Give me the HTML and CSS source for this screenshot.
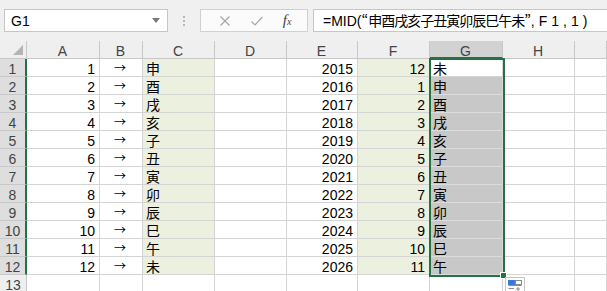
FILE: index.html
```html
<!DOCTYPE html>
<html lang="ja">
<head>
  <meta charset="UTF-8">
  <title>Excel - 干支</title>
  <link rel="stylesheet" href="styles.css">
</head>
<body>
<div class="app">
  <div class="bar">
    <div class="namebox"><span>G1</span><span class="caret"></span></div>
    <div class="grip"><i></i><i></i><i></i></div>
    <div class="fxbox">
      <svg class="ico" width="12" height="12" viewBox="0 0 12 12"><path d="M1.5 1.5 L10.5 10.5 M10.5 1.5 L1.5 10.5" stroke="#a6a6a6" stroke-width="1.2" fill="none"/></svg>
      <svg class="ico" width="14" height="12" viewBox="0 0 14 12"><path d="M1.5 6.5 L5 10 L12.5 2" stroke="#a6a6a6" stroke-width="1.2" fill="none"/></svg>
      <span class="fx">f<small>x</small></span>
    </div>
    <div class="formula">=MID(<span class="wq">“</span><span class="cjk">申酉戌亥子丑寅卯辰巳午未</span><span class="wq">”</span><span class="tail">,F1,1)</span></div>
  </div>

  <div class="sheet">
    <div class="row head">
      <div class="corner"><span class="tri"></span></div>
      <div>A</div><div>B</div><div>C</div><div>D</div><div>E</div><div>F</div><div class="hsel">G</div><div>H</div><div></div>
    </div>
    <div class="row"><div class="rh">1</div><div class="num">1</div><div class="arr">→</div><div class="green">申</div><div></div><div class="num">2015</div><div class="num green">12</div><div>未</div><div></div><div></div></div>
    <div class="row"><div class="rh">2</div><div class="num">2</div><div class="arr">→</div><div class="green">酉</div><div></div><div class="num">2016</div><div class="num green">1</div><div class="gray">申</div><div></div><div></div></div>
    <div class="row"><div class="rh">3</div><div class="num">3</div><div class="arr">→</div><div class="green">戌</div><div></div><div class="num">2017</div><div class="num green">2</div><div class="gray">酉</div><div></div><div></div></div>
    <div class="row"><div class="rh">4</div><div class="num">4</div><div class="arr">→</div><div class="green">亥</div><div></div><div class="num">2018</div><div class="num green">3</div><div class="gray">戌</div><div></div><div></div></div>
    <div class="row"><div class="rh">5</div><div class="num">5</div><div class="arr">→</div><div class="green">子</div><div></div><div class="num">2019</div><div class="num green">4</div><div class="gray">亥</div><div></div><div></div></div>
    <div class="row"><div class="rh">6</div><div class="num">6</div><div class="arr">→</div><div class="green">丑</div><div></div><div class="num">2020</div><div class="num green">5</div><div class="gray">子</div><div></div><div></div></div>
    <div class="row"><div class="rh">7</div><div class="num">7</div><div class="arr">→</div><div class="green">寅</div><div></div><div class="num">2021</div><div class="num green">6</div><div class="gray">丑</div><div></div><div></div></div>
    <div class="row"><div class="rh">8</div><div class="num">8</div><div class="arr">→</div><div class="green">卯</div><div></div><div class="num">2022</div><div class="num green">7</div><div class="gray">寅</div><div></div><div></div></div>
    <div class="row"><div class="rh">9</div><div class="num">9</div><div class="arr">→</div><div class="green">辰</div><div></div><div class="num">2023</div><div class="num green">8</div><div class="gray">卯</div><div></div><div></div></div>
    <div class="row"><div class="rh">10</div><div class="num">10</div><div class="arr">→</div><div class="green">巳</div><div></div><div class="num">2024</div><div class="num green">9</div><div class="gray">辰</div><div></div><div></div></div>
    <div class="row"><div class="rh">11</div><div class="num">11</div><div class="arr">→</div><div class="green">午</div><div></div><div class="num">2025</div><div class="num green">10</div><div class="gray">巳</div><div></div><div></div></div>
    <div class="row"><div class="rh">12</div><div class="num">12</div><div class="arr">→</div><div class="green">未</div><div></div><div class="num">2026</div><div class="num green">11</div><div class="gray">午</div><div></div><div></div></div>
    <div class="row"><div class="rh plain">13</div><div></div><div></div><div></div><div></div><div></div><div></div><div></div><div></div><div></div></div>

    <!-- 選択範囲の枠とフィルハンドル -->
    <div class="sel"><span class="handle"></span></div>
    <div class="autofill">
      <svg width="18" height="14" viewBox="0 0 18 14">
        <rect x="2" y="2" width="7" height="5" fill="#3c78d8"/>
        <rect x="9.5" y="2.5" width="6" height="4" fill="none" stroke="#8a8a8a"/>
        <path d="M2.5 7.5 H15.5 M2.5 10.5 H8 M12 9 V13 M10 11 H14" stroke="#8a8a8a" fill="none"/>
      </svg>
    </div>
  </div>
</div>
</body>
</html>
```

FILE: styles.css
```css
body {
  margin: 0;
  background: #fff;
  font-family: "Liberation Sans", "Noto Sans CJK JP", sans-serif;
  color: #000;
}
.app {
  width: 607px;
  height: 291px;
  overflow: hidden;
}
/* 数式バー */
.bar {
  height: 41px;
  box-sizing: border-box;
  padding: 9px 0 0 4px;
  background: #f0f0f0;
  display: flex;
  align-items: flex-start;
}
.namebox {
  width: 164px;
  height: 23px;
  box-sizing: border-box;
  border: 1px solid #c6c6c6;
  background: #fff;
  display: flex;
  align-items: center;
  justify-content: space-between;
  padding: 0 7px 0 6px;
  font-size: 14px;
}
.caret {
  width: 0;
  height: 0;
  border-left: 4px solid transparent;
  border-right: 4px solid transparent;
  border-top: 5px solid #7a7a7a;
}
.grip {
  width: 32px;
  height: 23px;
  display: flex;
  flex-direction: column;
  align-items: center;
  justify-content: center;
  gap: 2px;
}
.grip i {
  width: 2px;
  height: 2px;
  background: #b8b8b8;
}
.fxbox {
  width: 108px;
  height: 23px;
  box-sizing: border-box;
  border: 1px solid #d0d0d0;
  background: #fbfbfb;
  display: flex;
  align-items: center;
  justify-content: space-around;
  padding: 0 6px 0 8px;
}
.fx {
  font-family: "Liberation Serif", serif;
  font-style: italic;
  font-size: 15px;
  color: #444;
}
.fx small {
  font-size: 10px;
}
.formula {
  flex: 1;
  height: 23px;
  margin-left: 5px;
  box-sizing: border-box;
  border: 1px solid #c6c6c6;
  border-right: none;
  background: #fff;
  padding-left: 9px;
  font-size: 14px;
  line-height: 21px;
  white-space: nowrap;
}
.formula .wq {
  font-family: "Noto Sans CJK JP", sans-serif;
}
.formula .cjk {
  letter-spacing: -1px;
}
.formula .tail {
  letter-spacing: 4px;
}
/* シート */
.sheet {
  position: relative;
}
.row {
  display: grid;
  grid-template-columns: 27px 73px 43px 72px 72px 71px 72px 73px 72px 1fr;
  grid-template-rows: 18px;
  height: 18px;
}
.row > div {
  box-sizing: border-box;
  border-right: 1px solid #d4d4d4;
  border-bottom: 1px solid #d4d4d4;
  padding: 3px 4px 0 3px;
  line-height: 15px;
  font-size: 14px;
  white-space: nowrap;
  overflow: hidden;
}
.head > div {
  background: #efefef;
  color: #444;
  text-align: center;
  border-right-color: #c8c8c8;
  border-bottom-color: #c8c8c8;
}
.head .corner {
  display: flex;
  justify-content: flex-end;
  align-items: flex-end;
  padding: 0 3px 3px 0;
}
.tri {
  width: 0;
  height: 0;
  border-left: 10px solid transparent;
  border-bottom: 10px solid #b4b4b4;
}
.head .hsel {
  background: #d2d2d2;
  border-bottom: 2px solid #217346;
}
.row .rh {
  background: #dedede;
  color: #444;
  text-align: center;
  padding-left: 0;
  padding-right: 0;
  border-bottom-color: #c8c8c8;
  border-right: 2px solid #217346;
}
.row .rh.plain {
  background: #efefef;
  border-right: 1px solid #c8c8c8;
}
.num {
  text-align: right;
}
.row .arr {
  text-align: center;
  padding: 0 2px 0 0;
  line-height: 17px;
  font-family: "Noto Sans CJK JP", sans-serif;
  font-size: 12px;
}
.green {
  background: #ebf1de;
}
.row .gray {
  background: #c8c8c8;
  border-bottom-color: #dcdcdc;
}
.sel {
  position: absolute;
  left: 429px;
  top: 17px;
  width: 76px;
  height: 219px;
  box-sizing: border-box;
  border: 2px solid #217346;
}
.handle {
  position: absolute;
  right: -4px;
  bottom: -4px;
  width: 5px;
  height: 5px;
  background: #217346;
  border: 1px solid #fff;
}
.autofill {
  position: absolute;
  left: 505px;
  top: 236px;
  width: 20px;
  height: 16px;
  box-sizing: border-box;
  border: 1px solid #c6c6c6;
  background: #fff;
  display: flex;
}
```
